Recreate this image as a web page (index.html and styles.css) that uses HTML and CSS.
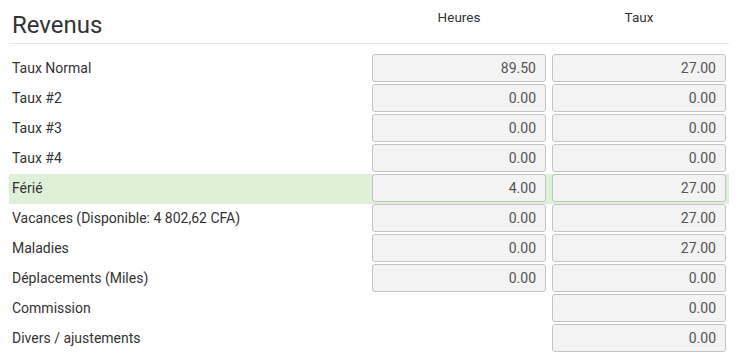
FILE: index.html
```html
<!DOCTYPE html>
<html lang="fr">
<head>
<meta charset="utf-8">
<link rel="stylesheet" href="styles.css">
</head>
<body>
<div class="panel">
  <div class="head">
    <h2 class="title">Revenus</h2>
    <div class="colhead">Heures</div>
    <div class="colhead">Taux</div>
  </div>
  <div class="rows">
    <div class="row"><div class="label">Taux Normal</div><div class="cell"><div class="input">89.50</div></div><div class="cell"><div class="input">27.00</div></div></div>
    <div class="row"><div class="label">Taux #2</div><div class="cell"><div class="input">0.00</div></div><div class="cell"><div class="input">0.00</div></div></div>
    <div class="row"><div class="label">Taux #3</div><div class="cell"><div class="input">0.00</div></div><div class="cell"><div class="input">0.00</div></div></div>
    <div class="row"><div class="label">Taux #4</div><div class="cell"><div class="input">0.00</div></div><div class="cell"><div class="input">0.00</div></div></div>
    <div class="row success"><div class="label">Férié</div><div class="cell"><div class="input">4.00</div></div><div class="cell"><div class="input">27.00</div></div></div>
    <div class="row"><div class="label">Vacances (Disponible: 4 802,62 CFA)</div><div class="cell"><div class="input">0.00</div></div><div class="cell"><div class="input">27.00</div></div></div>
    <div class="row"><div class="label">Maladies</div><div class="cell"><div class="input">0.00</div></div><div class="cell"><div class="input">27.00</div></div></div>
    <div class="row"><div class="label">Déplacements (Miles)</div><div class="cell"><div class="input">0.00</div></div><div class="cell"><div class="input">0.00</div></div></div>
    <div class="row"><div class="label">Commission</div><div class="cell"></div><div class="cell"><div class="input">0.00</div></div></div>
    <div class="row"><div class="label">Divers / ajustements</div><div class="cell"></div><div class="cell"><div class="input">0.00</div></div></div>
  </div>
</div>
</body>
</html>
```
FILE: styles.css
```css
html, body {
  margin: 0;
  padding: 0;
  background: #fff;
}
body {
  font-family: Roboto, "Liberation Sans", sans-serif;
  color: #333;
}
.panel {
  width: 720px;
  margin-left: 9px;
}
.head {
  display: grid;
  grid-template-columns: 360px 180px 180px;
  height: 43px;
  border-bottom: 1px solid #e8e8e8;
  margin-bottom: 10px;
}
.title {
  margin: 0;
  padding: 11px 0 0 3px;
  font-size: 24px;
  font-weight: 400;
  line-height: 28px;
  color: #333;
}
.colhead {
  text-align: center;
  font-size: 13.5px;
  line-height: 16px;
  padding-top: 9px;
  color: #333;
}
.rows {
  display: flex;
  flex-direction: column;
}
.row {
  display: grid;
  grid-template-columns: 360px 180px 180px;
  height: 30px;
}
.row.success {
  background: #dff0d8;
}
.label {
  font-size: 14px;
  line-height: 28px;
  padding-left: 3px;
  color: #333;
}
.cell {
  padding: 0 3px;
}
.input {
  box-sizing: border-box;
  height: 28px;
  border: 1px solid #c4c4c4;
  border-radius: 3px;
  background: #f3f3f3;
  font-size: 14px;
  line-height: 26px;
  text-align: right;
  padding-right: 9px;
  color: #555;
}
```
